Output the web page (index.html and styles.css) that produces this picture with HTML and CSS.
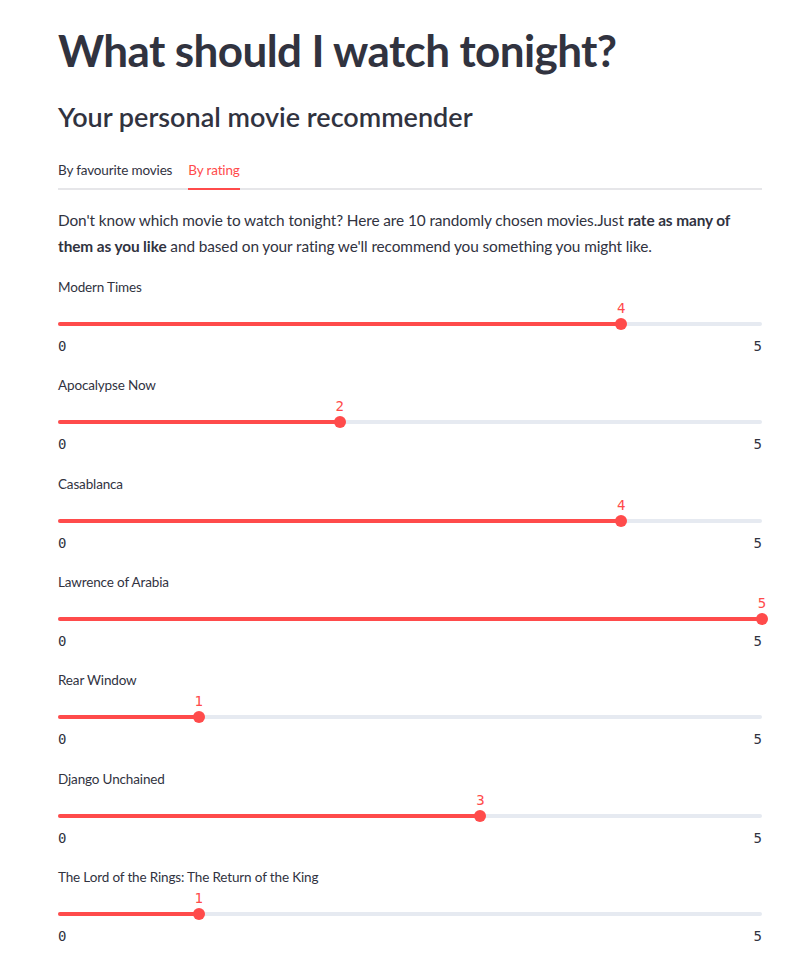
FILE: index.html
```html
<!DOCTYPE html>
<html>
<head>
<meta charset="utf-8">
<link rel="stylesheet" href="styles.css">
</head>
<body>
<main class="container">
  <h1 class="title">What should I watch tonight?</h1>
  <h2 class="subtitle">Your personal movie recommender</h2>
  <div class="tabs">
    <div class="tab">By favourite movies</div>
    <div class="tab active">By rating</div>
  </div>
  <p class="intro">Don't know which movie to watch tonight? Here are 10 randomly chosen movies.Just <strong>rate as many of them as you like</strong> and based on your rating we'll recommend you something you might like.</p>

  <div class="slider">
    <div class="slider-label">Modern Times</div>
    <div class="slider-body">
      <div class="rail"><div class="fill" style="width:80%"></div>
        <div class="thumb" style="left:80%"><span class="value">4</span></div></div>
    </div>
    <div class="ticks"><span>0</span><span>5</span></div>
  </div>

  <div class="slider">
    <div class="slider-label">Apocalypse Now</div>
    <div class="slider-body">
      <div class="rail"><div class="fill" style="width:40%"></div>
        <div class="thumb" style="left:40%"><span class="value">2</span></div></div>
    </div>
    <div class="ticks"><span>0</span><span>5</span></div>
  </div>

  <div class="slider">
    <div class="slider-label">Casablanca</div>
    <div class="slider-body">
      <div class="rail"><div class="fill" style="width:80%"></div>
        <div class="thumb" style="left:80%"><span class="value">4</span></div></div>
    </div>
    <div class="ticks"><span>0</span><span>5</span></div>
  </div>

  <div class="slider">
    <div class="slider-label">Lawrence of Arabia</div>
    <div class="slider-body">
      <div class="rail"><div class="fill" style="width:100%"></div>
        <div class="thumb" style="left:100%"><span class="value">5</span></div></div>
    </div>
    <div class="ticks"><span>0</span><span>5</span></div>
  </div>

  <div class="slider">
    <div class="slider-label">Rear Window</div>
    <div class="slider-body">
      <div class="rail"><div class="fill" style="width:20%"></div>
        <div class="thumb" style="left:20%"><span class="value">1</span></div></div>
    </div>
    <div class="ticks"><span>0</span><span>5</span></div>
  </div>

  <div class="slider">
    <div class="slider-label">Django Unchained</div>
    <div class="slider-body">
      <div class="rail"><div class="fill" style="width:60%"></div>
        <div class="thumb" style="left:60%"><span class="value">3</span></div></div>
    </div>
    <div class="ticks"><span>0</span><span>5</span></div>
  </div>

  <div class="slider">
    <div class="slider-label">The Lord of the Rings: The Return of the King</div>
    <div class="slider-body">
      <div class="rail"><div class="fill" style="width:20%"></div>
        <div class="thumb" style="left:20%"><span class="value">1</span></div></div>
    </div>
    <div class="ticks"><span>0</span><span>5</span></div>
  </div>
</main>
</body>
</html>
```

FILE: styles.css
```css
html, body {
  margin: 0;
  padding: 0;
  background: #ffffff;
}
body {
  font-family: "Lato", "Noto Sans", sans-serif;
  color: #31333f;
  overflow: hidden;
}
.container {
  width: 704px;
  padding: 24px 54px 0 58px;
}
.title {
  margin: 0;
  font-size: 44px;
  line-height: 52px;
  font-weight: 700;
  letter-spacing: -0.6px;
}
.subtitle {
  margin: 23px 0 0;
  font-size: 27px;
  line-height: 36px;
  font-weight: 600;
}
.tabs {
  margin-top: 25px;
  display: flex;
  gap: 16px;
  border-bottom: 2px solid #e6e6e9;
}
.tab {
  font-size: 13.5px;
  letter-spacing: -0.15px;
  line-height: 20px;
  padding-bottom: 8px;
  margin-bottom: -2px;
  border-bottom: 2px solid transparent;
}
.tab.active {
  color: #ff4b4b;
  border-bottom-color: #ff4b4b;
}
.intro {
  margin: 17px 0 0;
  font-size: 15.4px;
  letter-spacing: -0.1px;
  line-height: 26px;
}
.intro strong {
  font-weight: 700;
}
.slider {
  margin-top: 18px;
}
.slider + .slider {
  margin-top: 19.33px;
}
.slider-label {
  font-size: 13.5px;
  letter-spacing: -0.15px;
  line-height: 20px;
}
.slider-body {
  padding-top: 25px;
  height: 4px;
  padding-bottom: 5px;
}
.rail {
  position: relative;
  height: 4px;
  border-radius: 2px;
  background: #e6eaf1;
}
.fill {
  height: 4px;
  border-radius: 2px;
  background: #ff4b4b;
}
.thumb {
  position: absolute;
  top: -4px;
  width: 12px;
  height: 12px;
  margin-left: -6px;
  border-radius: 50%;
  background: #ff4b4b;
}
.value {
  position: absolute;
  bottom: 12px;
  left: 50%;
  transform: translateX(-50%);
  font-family: "DejaVu Sans Mono", "Liberation Mono", monospace;
  font-size: 14px;
  line-height: 20px;
  color: #ff4b4b;
}
.ticks {
  margin-top: 5px;
  display: flex;
  justify-content: space-between;
  font-family: "DejaVu Sans Mono", "Liberation Mono", monospace;
  font-size: 14px;
  line-height: 20px;
  color: #31333f;
}
```
